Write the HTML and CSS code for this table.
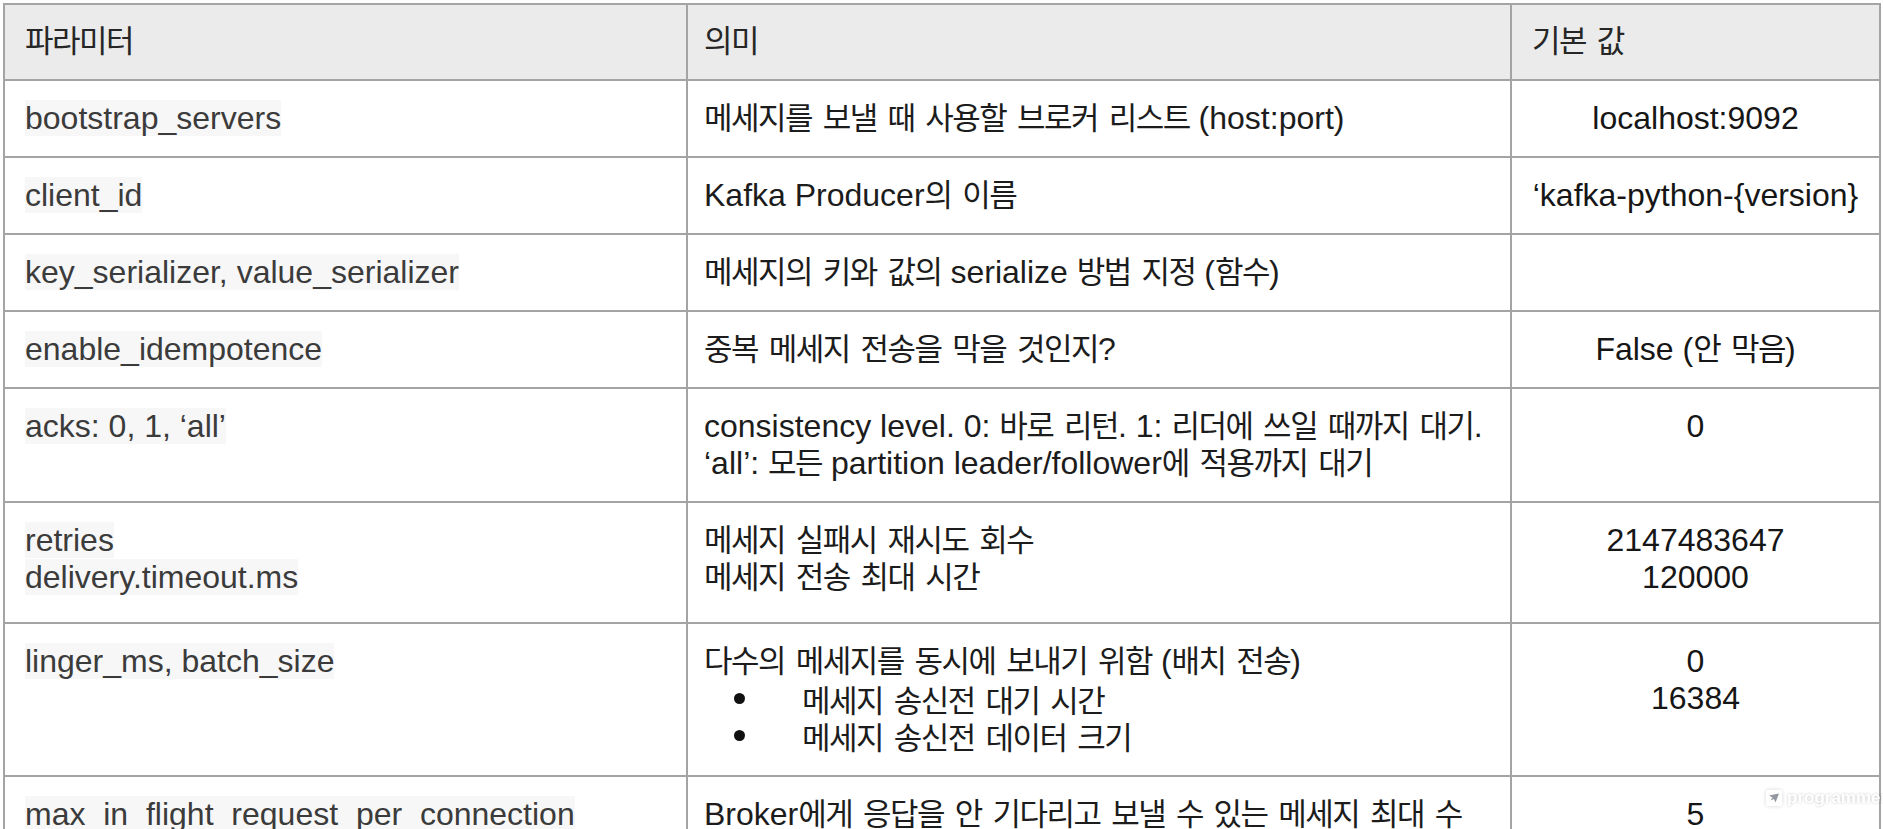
FILE: index.html
```html
<!DOCTYPE html>
<html lang="ko">
<head>
<meta charset="utf-8">
<title>KafkaProducer 파라미터</title>
<link rel="stylesheet" href="styles.css">
</head>
<body>
<table class="params">
  <colgroup>
    <col class="c-name">
    <col class="c-desc">
    <col class="c-def">
  </colgroup>
  <thead>
    <tr class="head">
      <th><span class="ko">파라미터</span></th>
      <th class="desc"><span class="ko">의미</span></th>
      <th><span class="ko">기본 값</span></th>
    </tr>
  </thead>
  <tbody>
    <tr>
      <td class="name"><span class="hl">bootstrap_servers</span></td>
      <td class="desc"><span class="ko">메세지를 보낼 때 사용할 브로커 리스트</span> (host:port)</td>
      <td class="def">localhost:9092</td>
    </tr>
    <tr>
      <td class="name"><span class="hl">client_id</span></td>
      <td class="desc">Kafka Producer<span class="ko">의 이름</span></td>
      <td class="def">‘kafka-python-{version}</td>
    </tr>
    <tr>
      <td class="name"><span class="hl">key_serializer, value_serializer</span></td>
      <td class="desc"><span class="ko">메세지의 키와 값의</span> serialize <span class="ko">방법 지정</span> (<span class="ko">함수</span>)</td>
      <td class="def"></td>
    </tr>
    <tr>
      <td class="name"><span class="hl">enable_idempotence</span></td>
      <td class="desc"><span class="ko">중복 메세지 전송을 막을 것인지</span>?</td>
      <td class="def">False (<span class="ko">안 막음</span>)</td>
    </tr>
    <tr>
      <td class="name"><span class="hl">acks: 0, 1, ‘all’</span></td>
      <td class="desc">
        <p>consistency level. 0: <span class="ko">바로 리턴</span>. 1: <span class="ko">리더에 쓰일 때까지 대기</span>.</p>
        <p>‘all’: <span class="ko">모든</span> partition leader/follower<span class="ko">에 적용까지 대기</span></p>
      </td>
      <td class="def">0</td>
    </tr>
    <tr class="r-pair">
      <td class="name">
        <p><span class="hl">retries</span></p>
        <p><span class="hl">delivery.timeout.ms</span></p>
      </td>
      <td class="desc">
        <p><span class="ko">메세지 실패시 재시도 회수</span></p>
        <p><span class="ko">메세지 전송 최대 시간</span></p>
      </td>
      <td class="def">
        <p>2147483647</p>
        <p>120000</p>
      </td>
    </tr>
    <tr class="r-list">
      <td class="name"><span class="hl">linger_ms, batch_size</span></td>
      <td class="desc">
        <p><span class="ko">다수의 메세지를 동시에 보내기 위함</span> (<span class="ko">배치 전송</span>)</p>
        <ul class="bullets">
          <li><span class="ko">메세지 송신전 대기 시간</span></li>
          <li><span class="ko">메세지 송신전 데이터 크기</span></li>
        </ul>
      </td>
      <td class="def">
        <p>0</p>
        <p>16384</p>
      </td>
    </tr>
    <tr>
      <td class="name"><span class="hl">max_in_flight_request_per_connection</span></td>
      <td class="desc">Broker<span class="ko">에게 응답을 안 기다리고 보낼 수 있는 메세지 최대 수</span></td>
      <td class="def">5</td>
    </tr>
  </tbody>
</table>

<div class="watermark">
  <span class="wm-icon">
    <svg viewBox="0 0 16 16" width="16" height="16" aria-hidden="true">
      <rect x="0" y="0" width="16" height="16" rx="2" fill="#ffffff"/>
      <path d="M3 5.5 L13 3.5 L9.5 12.5 L8 9 L4.5 10.5 L6.5 7.5 Z" fill="#8a8f99"/>
    </svg>
  </span>
  <span class="wm-text">programmers</span>
</div>
</body>
</html>
```

FILE: styles.css
```css
html, body {
  margin: 0;
  padding: 0;
  height: 100%;
  overflow: hidden;
  background: #ffffff;
}

body {
  font-family: "Liberation Sans", Arial, "Noto Sans CJK KR", sans-serif;
  font-size: 32px;
  line-height: 37px;
  color: #1e1e1e;
  position: relative;
}

.params {
  margin: 3px 0 0 3px;
  width: 1876px;
  table-layout: fixed;
  border-collapse: collapse;
  border: 2px solid #a4a4a4;
}

.c-name { width: 683px; }
.c-desc { width: 824px; }
.c-def  { width: 369px; }

.params th,
.params td {
  border: 2px solid #a4a4a4;
  padding: 19px 20px 19px 20px;
  vertical-align: top;
  text-align: left;
  font-weight: 400;
  white-space: nowrap;
}

.params th {
  background: #ebebeb;
  color: #262626;
  padding-top: 18px;
  padding-bottom: 19px;
}

.params .desc {
  padding-left: 16px;
}

.params p {
  margin: 0;
}

.name {
  color: #3b3b3b;
}

.hl {
  background: #f7f7f7;
}

.desc {
  color: #1c1c1c;
}

.params td.def {
  text-align: center;
  color: #161616;
}

.ko {
  font-family: "Noto Sans CJK KR", "Liberation Sans", sans-serif;
  font-size: 31px;
  line-height: 1;
  letter-spacing: -1.5px;
  word-spacing: 3.5px;
}

.r-pair td {
  padding-bottom: 26px;
}

.r-list td {
  padding-bottom: 21px;
}

.bullets {
  list-style: none;
  margin: 0;
  padding: 0;
}

.bullets li {
  display: flex;
  align-items: center;
  height: 37px;
  padding-left: 30px;
}

.bullets li::before {
  content: "";
  flex: none;
  width: 11px;
  height: 11px;
  border-radius: 50%;
  background: #111111;
  margin-right: 57px;
}

.watermark {
  position: absolute;
  left: 1766px;
  top: 789px;
  display: flex;
  align-items: center;
  gap: 5px;
  opacity: 0.92;
}

.wm-icon {
  display: flex;
  filter: drop-shadow(0 0 2px rgba(0, 0, 0, 0.18));
}

.wm-text {
  font-family: "Liberation Sans", Arial, sans-serif;
  font-weight: 700;
  font-size: 17px;
  line-height: 18px;
  color: #ffffff;
  text-shadow: 0 0 3px rgba(0, 0, 0, 0.25);
}
```
